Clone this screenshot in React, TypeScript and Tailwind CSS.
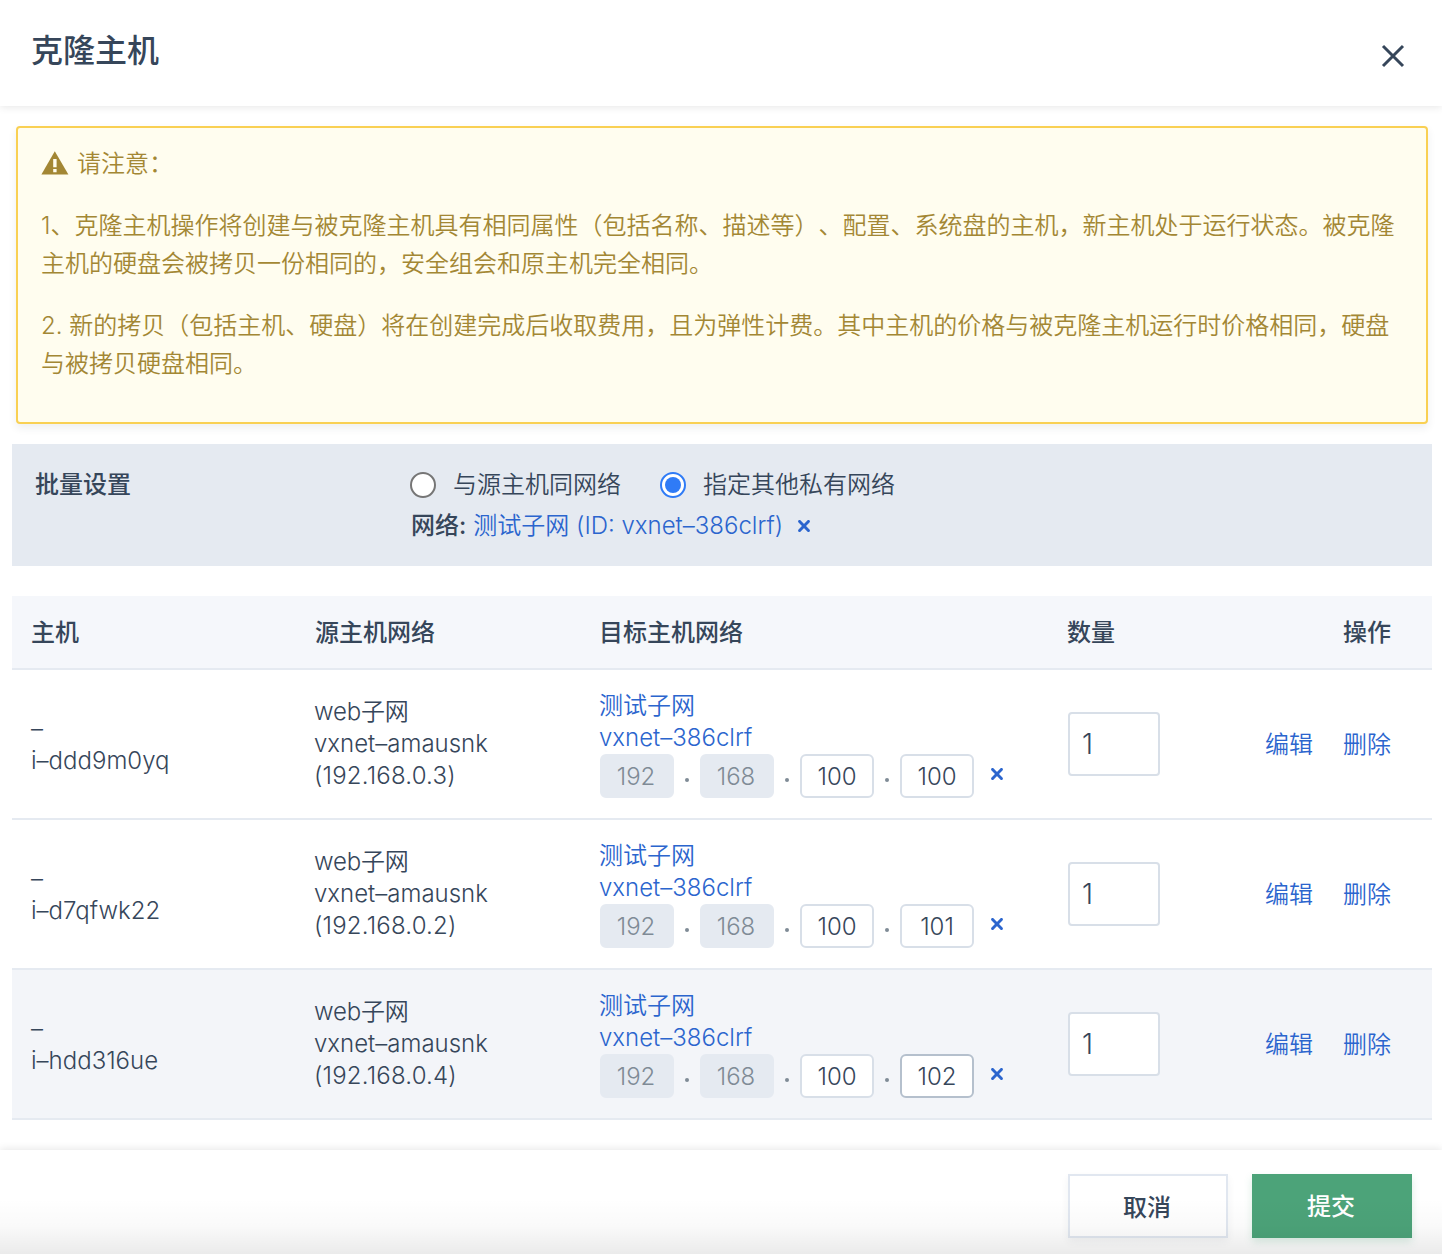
import React from 'react';

type Host = { id: string; source: string; last: string; active?: boolean };

const hosts: Host[] = [
  { id: 'i–ddd9m0yq', source: '(192.168.0.3)', last: '100' },
  { id: 'i–d7qfwk22', source: '(192.168.0.2)', last: '101' },
  { id: 'i–hdd316ue', source: '(192.168.0.4)', last: '102', active: true },
];

function SmallCross({ className = '' }: { className?: string }) {
  return (
    <svg className={className} width="12" height="12" viewBox="0 0 12 12" fill="none" stroke="#2b65ce" strokeWidth="2.9" strokeLinecap="round" aria-hidden="true">
      <path d="M1.6 1.4 10.4 10.6M10.4 1.4 1.6 10.6" />
    </svg>
  );
}

function WarningIcon() {
  return (
    <svg width="28" height="24" viewBox="0 0 28 24" aria-hidden="true">
      <path d="M13.8 0.3 27.4 23.5H0.4Z" fill="#a38734" />
      <path d="M12.2 8h3.4v8.2h-3.4zM12.2 18h3.4v3.2h-3.4z" fill="#fffdef" />
    </svg>
  );
}

function Radio({ checked }: { checked?: boolean }) {
  return checked ? (
    <span className="flex size-[26px] items-center justify-center rounded-full border-2 border-[#2f7bf6] bg-white">
      <span className="size-4 rounded-full bg-[#2f7bf6]" />
    </span>
  ) : (
    <span className="size-[26px] rounded-full border-2 border-[#767676] bg-white" />
  );
}

function Segment({ value, disabled, active }: { value: string; disabled?: boolean; active?: boolean }) {
  const tone = disabled
    ? 'border-[#e5eaf1] bg-[#e5eaf1] pr-0.5 text-[#7f8b96]'
    : active
      ? 'border-[#b5c0cd] bg-white pr-0 text-[#36465a]'
      : 'border-[#d8dfe8] bg-white pr-0 text-[#36465a]';
  return (
    <input
      className={`h-11 w-[74px] rounded-[6px] border-2 py-0 pl-0 text-center text-2xl outline-none ${tone}`}
      defaultValue={value}
      disabled={disabled}
    />
  );
}

function Dot() {
  return (
    <span className="flex w-[26px] justify-center pt-2">
      <span className="size-1 rounded-full bg-[#7f8b96]" />
    </span>
  );
}

function Row({ host }: { host: Host }) {
  return (
    <div
      className={`grid h-[150px] grid-cols-[284px_284px_468px_1fr_auto] items-center border-b-2 border-[#e5eaf1] ${host.active ? 'bg-[#f3f5f9]' : ''}`}
    >
      <div className="pt-px pl-[19px]">
        <div>–</div>
        <div>{host.id}</div>
      </div>
      <div className="pl-[18px]">
        <div className="tracking-[-0.2px]">web子网</div>
        <div>vxnet–amausnk</div>
        <div className="tracking-[0.2px]">{host.source}</div>
      </div>
      <div className="pl-5">
        <div className="-ml-px text-[#2b65ce]">测试子网</div>
        <div className="-ml-px text-[#2b65ce]">vxnet–386clrf</div>
        <div className="flex items-center">
          <Segment value="192" disabled />
          <Dot />
          <Segment value="168" disabled />
          <Dot />
          <Segment value="100" />
          <Dot />
          <Segment value={host.last} active={host.active} />
          <SmallCross className="mb-1 ml-[17px]" />
        </div>
      </div>
      <div className="pl-5">
        <input
          className="h-16 w-[92px] rounded-[4px] border-2 border-[#d8dfe8] bg-white px-3 text-[28px] text-[#36465a] outline-none"
          defaultValue="1"
        />
      </div>
      <div className="flex gap-[30px] pt-px pr-[41px] text-[#2b65ce]">
        <span>编辑</span>
        <span>删除</span>
      </div>
    </div>
  );
}

export default function App() {
  return (
    <div className="relative flex h-[1254px] w-[1442px] flex-col overflow-hidden bg-white font-['Inter','Noto_Sans_CJK_SC',sans-serif] text-2xl leading-8 font-[350] text-[#36465a] [text-spacing-trim:space-all]">
      <header className="flex h-[106px] shrink-0 items-start justify-between pt-7 pr-[37px] pl-[31px] shadow-[0_1px_8px_rgba(0,0,0,0.1)]">
        <h1 className="text-[32px] leading-[46px] font-medium">克隆主机</h1>
        <svg className="mt-4" width="24" height="24" viewBox="0 0 24 24" fill="none" stroke="#36465a" strokeWidth="3" aria-hidden="true">
          <path d="M2 2 22 22M22 2 2 22" />
        </svg>
      </header>

      <section className="mt-5 mr-[14px] ml-4 h-[298px] shrink-0 rounded-[4px] border-2 border-[#f9d053] bg-[#fffdef] px-[23px] pt-[17px] leading-[38px] text-[#a38734] shadow-[0_4px_8px_rgba(36,46,66,0.08)]">
        <div className="flex items-center gap-2">
          <span className="-mt-0.5">
            <WarningIcon />
          </span>
          <span>请注意：</span>
        </div>
        <p className="mt-6 whitespace-nowrap">
          1、克隆主机操作将创建与被克隆主机具有相同属性（包括名称、描述等）、配置、系统盘的主机，新主机处于运行状态。被克隆
          <br />
          主机的硬盘会被拷贝一份相同的，安全组会和原主机完全相同。
        </p>
        <p className="mt-6 whitespace-nowrap">
          2. 新的拷贝（包括主机、硬盘）将在创建完成后收取费用，且为弹性计费。其中主机的价格与被克隆主机运行时价格相同，硬盘
          <br />
          与被拷贝硬盘相同。
        </p>
      </section>

      <section className="mt-5 mr-[10px] ml-3 flex h-[122px] shrink-0 bg-[#e5eaf1] pt-[25px] pl-[23px]">
        <h2 className="w-[375px] font-medium">批量设置</h2>
        <div>
          <div className="flex items-center">
            <Radio />
            <span className="ml-[17px]">与源主机同网络</span>
            <span className="ml-[39px] flex">
              <Radio checked />
            </span>
            <span className="ml-[17px]">指定其他私有网络</span>
          </div>
          <div className="mt-[9px] flex items-center">
            <span className="mr-[7px] ml-px font-medium">网络:</span>
            <span className="text-[#2b65ce]">测试子网 (ID: vxnet–386clrf)</span>
            <SmallCross className="ml-[15px]" />
          </div>
        </div>
      </section>

      <section className="mt-[30px] mr-[10px] ml-3 shrink-0">
        <div className="grid h-[74px] grid-cols-[284px_284px_468px_1fr_auto] items-center border-b-2 border-[#e5eaf1] bg-[#f5f7fb] pt-px font-medium">
          <span className="pl-[19px]">主机</span>
          <span className="pl-[19px]">源主机网络</span>
          <span className="pl-[19px]">目标主机网络</span>
          <span className="pl-[19px]">数量</span>
          <span className="pr-[41px]">操作</span>
        </div>
        {hosts.map((host) => (
          <Row key={host.id} host={host} />
        ))}
      </section>

      <footer className="mt-[30px] flex flex-1 items-start justify-end gap-6 pt-6 pr-[30px] font-medium shadow-[0_-1px_8px_rgba(0,0,0,0.1)]">
        <button className="h-16 w-40 border-2 border-[#e1e7f0] bg-white pt-1 pr-0.5 shadow-[0_4px_8px_rgba(36,46,66,0.06)]">取消</button>
        <button className="h-16 w-40 bg-[#4ca379] pt-px pr-0.5 text-white shadow-[0_4px_8px_rgba(76,163,121,0.2)]">提交</button>
      </footer>
      <div className="pointer-events-none absolute inset-x-0 bottom-0 h-14 bg-linear-to-b from-transparent via-black/2 to-black/8" />
    </div>
  );
}
